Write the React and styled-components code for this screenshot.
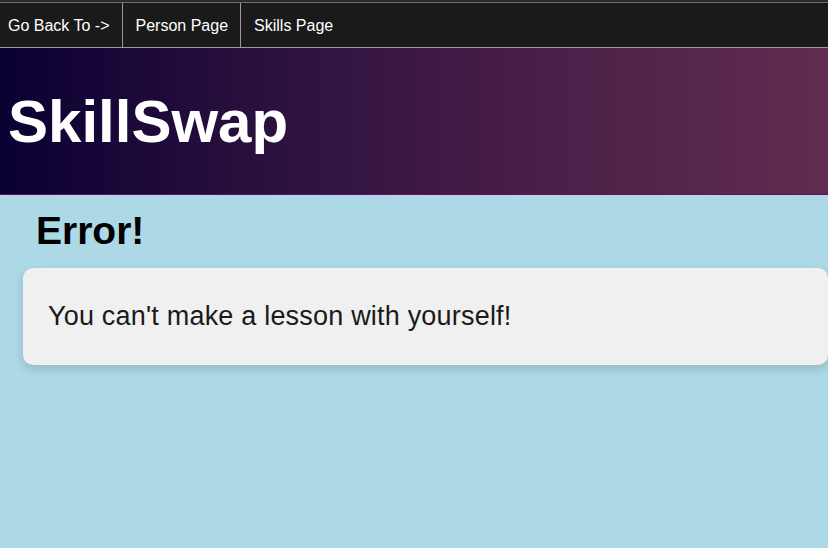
import React from 'react';
import styled, { createGlobalStyle } from 'styled-components';

const GlobalStyle = createGlobalStyle`
  html, body {
    margin: 0;
    padding: 0;
    background: #add8e6;
    font-family: "Liberation Sans", Arial, sans-serif;
  }
  #root {
    min-height: 100vh;
  }
`;

const NavBar = styled.nav`
  display: flex;
  align-items: stretch;
  height: 44px;
  padding-top: 3px;
  background: linear-gradient(#2b2b2b 0 2px, #6e6e6e 2px 3px, #1a1a1a 3px);
  border-bottom: 1px solid #9a9a9a;
  color: #ffffff;
  font-size: 16px;
`;

const NavLabel = styled.span`
  display: flex;
  align-items: center;
  padding: 2px 12px 0 8px;
`;

const NavLink = styled.a`
  display: flex;
  align-items: center;
  padding: 2px 12px 0 13px;
  color: #ffffff;
  text-decoration: none;
  border-left: ${({ $divider }) => ($divider ? '1px solid #9a9a9a' : 'none')};
  cursor: pointer;
`;

const Header = styled.header`
  display: flex;
  align-items: center;
  height: 146px;
  padding: 0 8px;
  background: linear-gradient(to right, #0a0032, #2e1240 35%, #4a1f48 65%, #612c51);
  border-bottom: 1px solid #6a0d5e;
`;

const Title = styled.h1`
  margin: 0;
  color: #ffffff;
  font-size: 60px;
  font-weight: bold;
`;

const Main = styled.main`
  padding: 14px 0 0 23px;
`;

const Heading = styled.h2`
  margin: 0 0 15px 13px;
  font-size: 39px;
  font-weight: bold;
  color: #000000;
`;

const Card = styled.div`
  background: #f0f0f0;
  border-radius: 10px;
  padding: 0 25px;
  box-shadow: 0 4px 10px rgba(0, 0, 0, 0.15);
`;

const Message = styled.p`
  margin: 0;
  padding: 33px 0;
  font-size: 27px;
  letter-spacing: 0.2px;
  color: #1a1a1a;
`;

export default function App() {
  return (
    <>
      <GlobalStyle />
      <NavBar>
        <NavLabel>Go Back To -&gt;</NavLabel>
        <NavLink $divider>Person Page</NavLink>
        <NavLink $divider>Skills Page</NavLink>
      </NavBar>
      <Header>
        <Title>SkillSwap</Title>
      </Header>
      <Main>
        <Heading>Error!</Heading>
        <Card>
          <Message>You can't make a lesson with yourself!</Message>
        </Card>
      </Main>
    </>
  );
}
